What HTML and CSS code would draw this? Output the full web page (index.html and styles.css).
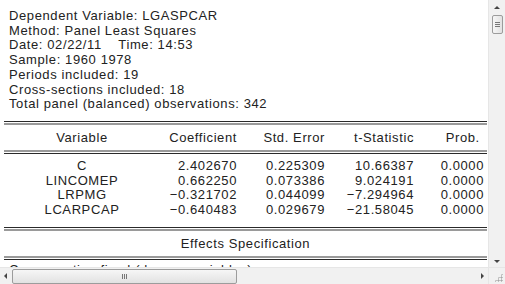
FILE: index.html
```html
<!DOCTYPE html>
<html lang="en">

<head>
    <title>Equation: Panel Least Squares</title>
    <link rel="stylesheet" href="styles.css">
</head>

<body>
    <div class="window">
        <div class="view">
            <div class="output">
                <div class="info">
                    <div>Dependent Variable: LGASPCAR</div>
                    <div>Method: Panel Least Squares</div>
                    <div>Date: 02/22/11&nbsp;&nbsp;&nbsp; Time: 14:53</div>
                    <div>Sample: 1960 1978</div>
                    <div>Periods included: 19</div>
                    <div>Cross-sections included: 18</div>
                    <div>Total panel (balanced) observations: 342</div>
                </div>

                <div class="rule"></div>
                <div class="grid head">
                    <div class="name">Variable</div>
                    <div>Coefficient</div>
                    <div>Std. Error</div>
                    <div>t-Statistic</div>
                    <div>Prob.&nbsp;</div>
                </div>
                <div class="rule rule-low"></div>

                <div class="coefs">
                    <div class="grid">
                        <div class="name">C</div>
                        <div>2.402670</div>
                        <div>0.225309</div>
                        <div>10.66387</div>
                        <div>0.0000</div>
                    </div>
                    <div class="grid">
                        <div class="name">LINCOMEP</div>
                        <div>0.662250</div>
                        <div>0.073386</div>
                        <div>9.024191</div>
                        <div>0.0000</div>
                    </div>
                    <div class="grid">
                        <div class="name">LRPMG</div>
                        <div>&minus;0.321702</div>
                        <div>0.044099</div>
                        <div>&minus;7.294964</div>
                        <div>0.0000</div>
                    </div>
                    <div class="grid">
                        <div class="name">LCARPCAP</div>
                        <div>&minus;0.640483</div>
                        <div>0.029679</div>
                        <div>&minus;21.58045</div>
                        <div>0.0000</div>
                    </div>
                </div>

                <div class="rule"></div>
                <div class="section">Effects Specification</div>
                <div class="rule rule-low"></div>
                <div class="info tail">
                    <div>Cross-section fixed (dummy variables)</div>
                </div>
            </div>
        </div>

        <div class="vscroll">
            <div class="arrow arrow-up"></div>
            <div class="vthumb"><span></span><span></span><span></span></div>
            <div class="vtrack"></div>
            <div class="arrow arrow-down"></div>
        </div>

        <div class="hscroll">
            <div class="arrow arrow-left"></div>
            <div class="hthumb"><span></span><span></span><span></span></div>
            <div class="htrack"></div>
            <div class="arrow arrow-right"></div>
        </div>

        <div class="corner"><div class="grip"></div></div>
    </div>
</body>

</html>
```

FILE: styles.css
```css
body {
    margin: 0;
    background-color: white;
    font-family: "Liberation Sans", Arial, sans-serif;
    font-size: 13px;
    letter-spacing: 0.6px;
    color: #222;
}

.window {
    width: 505px;
    height: 284px;
    display: grid;
    grid-template-columns: 488px 17px;
    grid-template-rows: 267px 17px;
    overflow: hidden;
}

.view {
    overflow: hidden;
    background-color: white;
}

.output {
    padding: 9px 0 0 4px;
    width: 483px;
}

.info {
    padding-left: 5px;
    line-height: 14.7px;
}

.tail {
    padding-top: 3px;
}

/* double rule: dark line over grey one */
.rule {
    height: 1px;
    border-top: 1px solid #2a2a2a;
    border-bottom: 2px solid #9a9a9a;
    margin-top: 9px;
}

.rule-low {
    border-top: 2px solid #9a9a9a;
    border-bottom: 1px solid #2a2a2a;
    margin-top: 0;
}

.grid {
    display: grid;
    grid-template-columns: 156px 80px 88px 89px 70px;
    text-align: right;
    line-height: 14.5px;
}

.grid div {
    padding-right: 3px;
}

.grid .name {
    text-align: center;
    padding-right: 0;
}

.head {
    padding: 6px 0 5px;
}

.coefs {
    padding-top: 5px;
    padding-bottom: 10px;
}

.coefs + .rule {
    margin-top: 0;
}

.section {
    text-align: center;
    line-height: 14.7px;
    padding: 6px 0 4px;
}

/* scroll bars */
.vscroll {
    background-color: #f1f1f1;
    border-left: 1px solid #e6e6e6;
    display: flex;
    flex-direction: column;
    align-items: center;
}

.hscroll {
    background-color: #f1f1f1;
    border-top: 1px solid #e6e6e6;
    display: flex;
    align-items: center;
}

.corner {
    background-color: #f1f1f1;
    border-top: 1px solid #e6e6e6;
    border-left: 1px solid #e6e6e6;
    display: flex;
    justify-content: flex-end;
    align-items: flex-end;
}

.grip {
    width: 9px;
    height: 9px;
    margin: 0 2px 2px 0;
    background-image: radial-gradient(circle, #a8a8a8 0.9px, transparent 1.2px);
    background-size: 3px 3px;
    clip-path: polygon(100% 0, 100% 100%, 0 100%);
}

.vtrack,
.htrack {
    flex: 1;
}

.arrow {
    width: 0;
    height: 0;
    flex: none;
}

.arrow-up {
    margin: 6px 0 6px;
    border-left: 3px solid transparent;
    border-right: 3px solid transparent;
    border-bottom: 3px solid #444;
}

.arrow-down {
    margin: 0 0 4px;
    border-left: 3px solid transparent;
    border-right: 3px solid transparent;
    border-top: 3px solid #444;
}

.arrow-left {
    margin: 0 5px 0 4px;
    border-top: 3px solid transparent;
    border-bottom: 3px solid transparent;
    border-right: 3px solid #444;
}

.arrow-right {
    margin: 0 4px 0 0;
    border-top: 3px solid transparent;
    border-bottom: 3px solid transparent;
    border-left: 3px solid #444;
}

.vthumb {
    width: 11px;
    height: 19px;
    border: 1px solid #9c9c9c;
    border-radius: 2px;
    background: linear-gradient(to right, #f6f6f6, #e2e2e2);
    display: flex;
    flex-direction: column;
    align-items: center;
    justify-content: center;
    gap: 1px;
    box-sizing: border-box;
}

.vthumb span {
    width: 5px;
    height: 1px;
    background-color: #777;
}

.hthumb {
    width: 225px;
    height: 15px;
    border: 1px solid #9c9c9c;
    border-radius: 2px;
    background: linear-gradient(#f6f6f6, #e2e2e2);
    display: flex;
    align-items: center;
    justify-content: center;
    gap: 1px;
    box-sizing: border-box;
}

.hthumb span {
    width: 1px;
    height: 5px;
    background-color: #777;
}
```
